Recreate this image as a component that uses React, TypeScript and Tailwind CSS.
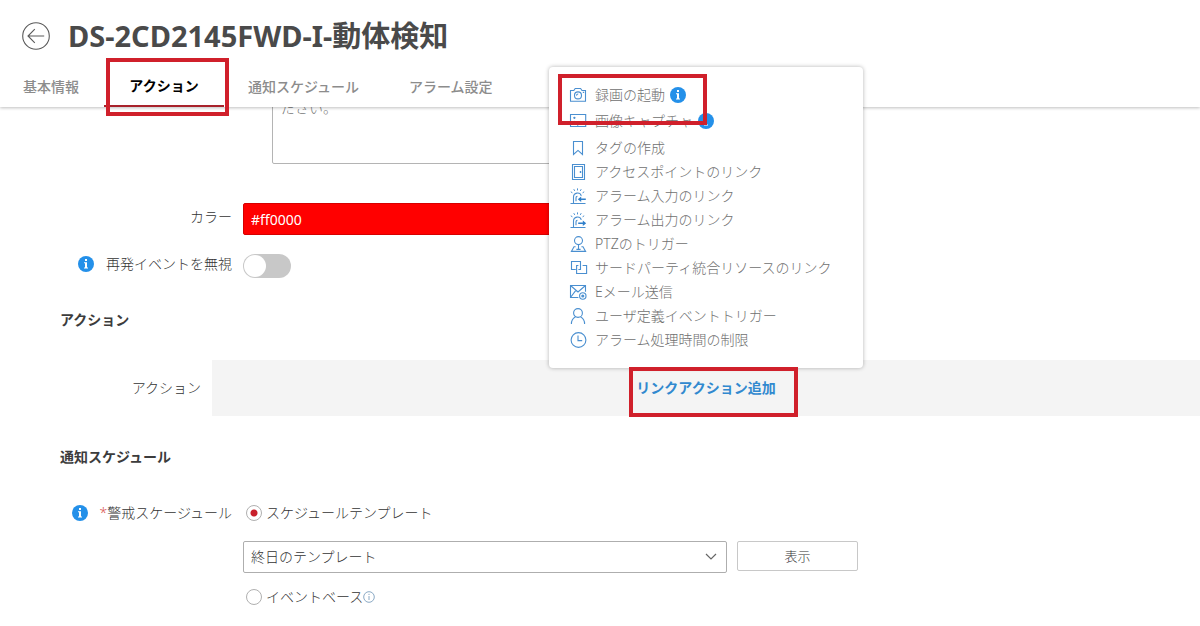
import React, { useState } from "react";

type IconProps = { children: React.ReactNode };

function MenuIcon({ children }: IconProps) {
  return (
    <svg
      className="size-4 shrink-0 overflow-visible"
      viewBox="0 0 16 16"
      fill="none"
      stroke="#4a8fd0"
      strokeWidth="1.1"
      aria-hidden="true"
    >
      {children}
    </svg>
  );
}

function InfoBadge() {
  return (
    <svg className="size-4 shrink-0" viewBox="0 0 16 16" aria-hidden="true">
      <circle cx="8" cy="8" r="8" fill="#2490e9" />
      <rect x="7" y="3" width="2" height="2" fill="#fff" />
      <path d="M6 6.2h3v5.4h1v1H6v-1h1V7.2H6z" fill="#fff" />
    </svg>
  );
}

function Siren({ arrow }: { arrow: "in" | "out" }) {
  return (
    <MenuIcon>
      <path d="M.5 15.5h15M3.5 15.2V9a4 4 0 0 1 7.8-1.2M6 13.2V9.8c0-.8.5-1.4 1.4-1.4" />
      <path d="M7.5 .4v2M3.8 1.2l.9 1.7M11.2 1.2l-.9 1.7M.8 3.8l1.6 1M14.2 3.8l-1.6 1" strokeWidth="1" />
      {arrow === "in" ? (
        <path d="M7.8 11.2L11.2 8.4v2h4.6V12h-4.6v2z" fill="#2f7fca" stroke="none" />
      ) : (
        <path d="M16.2 11.2l-3.4-2.8v2H8.2V12h4.6v2z" fill="#2f7fca" stroke="none" />
      )}
    </MenuIcon>
  );
}

const menuItems: { label: string; icon: React.ReactNode }[] = [
  { label: "タグの作成", icon: <MenuIcon><path d="M3.5 1.5h9v13L8 10.4l-4.5 4.1z" /></MenuIcon> },
  {
    label: "アクセスポイントのリンク",
    icon: (
      <MenuIcon>
        <path d="M2.5 .5h12v15h-12zM4.5 2.5h8v11h-8z" />
        <path d="M10.5 7v2" strokeWidth="1.4" />
      </MenuIcon>
    ),
  },
  { label: "アラーム入力のリンク", icon: <Siren arrow="in" /> },
  { label: "アラーム出力のリンク", icon: <Siren arrow="out" /> },
  {
    label: "PTZのトリガー",
    icon: (
      <MenuIcon>
        <circle cx="8.5" cy="4.6" r="4" />
        <path d="M8.5 8.6v5M5.6 10.8H4L1.4 15.4h14.2L13 10.8h-1.6M6.4 13.4h4.2" />
      </MenuIcon>
    ),
  },
  {
    label: "サードパーティ統合リソースのリンク",
    icon: (
      <MenuIcon>
        <path d="M5.8 9.5H1.5v-8h9v8H8.4M12.6 5.5h4v8h-10v-8h1.8" />
      </MenuIcon>
    ),
  },
  {
    label: "Eメール送信",
    icon: (
      <MenuIcon>
        <path d="M8.4 13.5H.5v-12h15v6.2M.5 1.5L8 8l7.5-6.5M.5 13.5L5.8 6.4" />
        <circle cx="12.8" cy="12" r="3.2" />
        <circle cx="12.8" cy="12" r="1" fill="#4a8fd0" />
      </MenuIcon>
    ),
  },
  {
    label: "ユーザ定義イベントトリガー",
    icon: (
      <MenuIcon>
        <circle cx="8" cy="5" r="4.4" />
        <path d="M1.4 16c0-3.4 1.6-5.8 4-7M14.6 16c0-3.4-1.6-5.8-4-7" />
      </MenuIcon>
    ),
  },
  {
    label: "アラーム処理時間の制限",
    icon: (
      <MenuIcon>
        <circle cx="8.5" cy="8" r="7.4" />
        <path d="M8 3.6v5h4.2" />
      </MenuIcon>
    ),
  },
];

const itemClass = "flex w-full items-center gap-[9px] text-left";
const highlight = "pointer-events-none absolute border-4 border-[#d0202b]";
const tabClass = "text-[#8c8c8c] font-medium";

function ActionMenu() {
  return (
    <div
      role="menu"
      className="absolute bottom-12 left-1/2 z-20 w-[314px] -translate-x-1/2 rounded-sm bg-white pt-[14px] pr-4 pb-4 pl-[21px] font-light text-[#707070] shadow-[0_0_4px_rgba(0,0,0,0.3)]"
    >
      <div className="relative">
        <button type="button" role="menuitem" className={`${itemClass} h-7`}>
          <MenuIcon>
            <path d="M.5 3.5h3.3l1.4-2h5.4l1.4 2h3.5v10.8H.5z" />
            <circle cx="8" cy="8.4" r="3.5" />
            <path d="M6.6 8.6a1.5 1.5 0 0 1 1.6-1.6M12.8 5.4h1.4" />
          </MenuIcon>
          <span className="flex items-center gap-[5px]">
            録画の起動
            <InfoBadge />
          </span>
        </button>
        <button type="button" role="menuitem" className={`${itemClass} h-6`}>
          <MenuIcon>
            <path d="M.5 1.5h15.2v12H.5zM.6 10.5l3.6-2 4 4" />
            <circle cx="4.4" cy="4.8" r=".6" fill="#4a8fd0" />
          </MenuIcon>
          <span className="flex items-center gap-[5px]">
            画像キャプチャ
            <InfoBadge />
          </span>
        </button>
        <span className={`${highlight} -top-[7px] -left-3 h-[51px] w-[149px]`} />
      </div>
      <div className="pt-[3px]">
        {menuItems.map((item) => (
          <button key={item.label} type="button" role="menuitem" className={`${itemClass} h-6`}>
            {item.icon}
            <span className="whitespace-nowrap">{item.label}</span>
          </button>
        ))}
      </div>
    </div>
  );
}

function Radio({
  id,
  checked,
  onChange,
  children,
}: {
  id: string;
  checked: boolean;
  onChange: () => void;
  children: React.ReactNode;
}) {
  return (
    <label htmlFor={id} className="ml-[3px] flex h-6 items-center gap-1">
      <input
        id={id}
        type="radio"
        name="schedule"
        checked={checked}
        onChange={onChange}
        className="size-4 appearance-none rounded-full border border-[#b0b0b0] bg-white checked:bg-[radial-gradient(circle,#c8202b_3px,transparent_4px)]"
      />
      {children}
    </label>
  );
}

export default function App() {
  const [mode, setMode] = useState("template");
  const [ignore, setIgnore] = useState(false);

  return (
    <div className="min-h-screen bg-white font-['Noto_Sans','Noto_Sans_CJK_JP',sans-serif] text-sm font-light text-[#333333]">
      <header className="relative z-10 bg-white shadow-[0_1px_3px_rgba(0,0,0,0.25)]">
        <div className="flex h-[66px] items-center gap-[18px] pt-[6px] pl-[22px]">
          <button type="button" aria-label="戻る">
            <svg className="size-7" viewBox="0 0 28 28" fill="none" stroke="#5a5a5a" strokeWidth="1.1">
              <circle cx="14" cy="14" r="13.3" />
              <path d="M22.2 14H6M12.8 7.2L6 14l6.8 6.8" />
            </svg>
          </button>
          <h1 className="text-[29px] leading-8 font-bold text-[#4a4a4a]">DS-2CD2145FWD-I-動体検知</h1>
        </div>
        <nav className="flex h-[41px] items-center pl-[23px]">
          <a href="#basic" className={tabClass}>基本情報</a>
          <a
            href="#action"
            className="relative ml-[25px] flex h-full w-[120px] items-center justify-center border-b-2 border-[#a8222b] font-bold text-black"
          >
            アクション
            <span className={`${highlight} -top-2 left-[2px] h-[58px] w-[123px]`} />
          </a>
          <a href="#schedule" className={`${tabClass} ml-6`}>通知スケジュール</a>
          <a href="#alarm" className={`${tabClass} ml-[50px]`}>アラーム設定</a>
        </nav>
      </header>

      <main>
        <div className="-mt-4 ml-[272px]">
          <textarea
            aria-label="説明"
            placeholder="ださい。"
            className="block h-[73px] w-[455px] resize-none rounded-xs border border-[#b4b4b4] px-2 py-[6px] leading-5 placeholder:text-[#777777]"
          />
        </div>

        <div className="mt-[39px] flex h-8 items-center gap-[11px]">
          <label htmlFor="color" className="w-58 pb-1 text-right">カラー</label>
          <input
            id="color"
            defaultValue="#ff0000"
            className="h-8 w-[485px] rounded-xs border border-[#d60000] bg-[#ff0000] px-[7px] font-normal text-white"
          />
        </div>

        <div className="mt-[19px] flex h-6 items-center gap-[11px]">
          <label htmlFor="ignore" className="flex w-58 items-center justify-end gap-3 pb-1">
            <InfoBadge />
            再発イベントを無視
          </label>
          <input
            id="ignore"
            type="checkbox"
            role="switch"
            checked={ignore}
            onChange={() => setIgnore(!ignore)}
            className="h-6 w-12 appearance-none rounded-full bg-[#c8c8c8] before:m-px before:block before:size-[22px] before:rounded-full before:bg-white checked:bg-[#c8202b] checked:before:ml-[25px]"
          />
        </div>

        <h2 className="mt-8 ml-[60px] leading-5 font-bold text-[#3c3c3c]">アクション</h2>
        <section className="mt-[30px] flex h-14 items-center gap-[11px]">
          <span className="w-[201px] text-right">アクション</span>
          <div className="relative flex h-full flex-1 items-center justify-center bg-[#f4f4f4]">
            <ActionMenu />
            <div className="relative">
              <button type="button" className="block leading-5 font-bold text-[#3189cf]">
                リンクアクション追加
              </button>
              <span className={`${highlight} -top-[11px] -left-[7px] z-20 h-[50px] w-[169px]`} />
            </div>
          </div>
        </section>

        <h2 className="mt-[31px] ml-[60px] leading-5 font-bold text-[#3c3c3c]">通知スケジュール</h2>
        <section className="mt-[34px] flex gap-[11px]">
          <div className="flex h-6 w-58 items-center justify-end gap-3">
            <InfoBadge />
            <span>
              <span className="text-[#d9534f]">*</span>警戒スケージュール
            </span>
          </div>
          <div>
            <Radio id="template" checked={mode === "template"} onChange={() => setMode("template")}>
              スケジュールテンプレート
            </Radio>
            <div className="mt-4 flex items-start gap-[10px]">
              <div className="relative">
                <select
                  aria-label="スケジュールテンプレート"
                  className="h-8 w-[484px] appearance-none rounded-xs border border-[#aeaeae] bg-white px-[7px]"
                >
                  <option>終日のテンプレート</option>
                </select>
                <svg
                  className="pointer-events-none absolute top-3 right-[10px] h-2 w-3"
                  viewBox="0 0 12 8"
                  fill="none"
                  stroke="#666666"
                  strokeWidth="1.2"
                >
                  <path d="M1 1l5 5 5-5" />
                </svg>
              </div>
              <button type="button" className="h-[30px] w-[121px] rounded-xs border border-[#c8c8c8] text-[13px]">
                表示
              </button>
            </div>
            <div className="mt-3">
              <Radio id="event" checked={mode === "event"} onChange={() => setMode("event")}>
                <span className="flex items-center">
                  イベントベース
                  <svg className="size-3" viewBox="0 0 12 12" fill="none" stroke="#8aa9c4" strokeWidth="1">
                    <circle cx="6" cy="6" r="5.3" />
                    <path d="M6 5v4M6 2.8v1.2" />
                  </svg>
                </span>
              </Radio>
            </div>
          </div>
        </section>
      </main>
    </div>
  );
}
